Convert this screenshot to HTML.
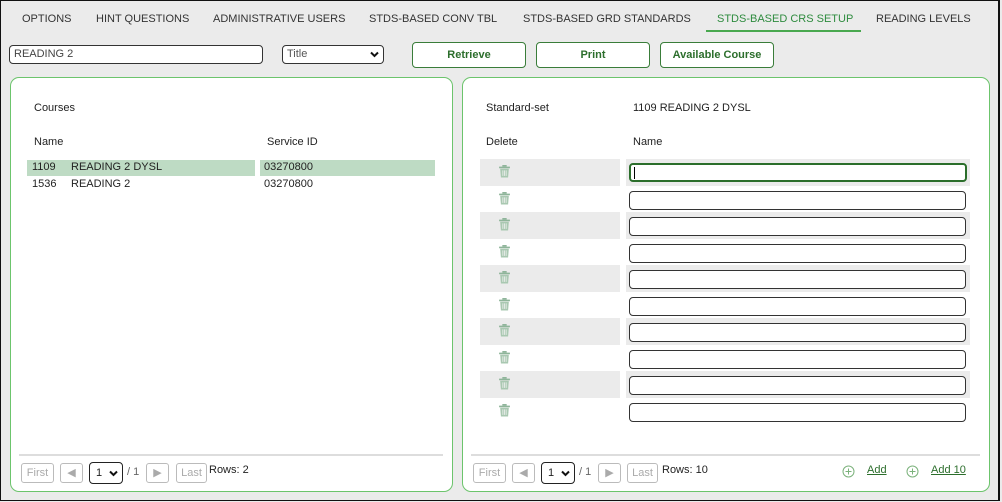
<!DOCTYPE html>
<html><head><meta charset="utf-8"><style>
*{box-sizing:border-box;margin:0;padding:0}
body{width:1002px;height:502px;background:#ebebeb;font-family:"Liberation Sans",sans-serif;font-size:11px;color:#222;position:relative;overflow:hidden}
.frame{position:absolute;left:0;top:0;width:1000px;height:501px;border:1px solid #111;border-right:2px solid #111}
.a{position:absolute;white-space:nowrap}
.tab{position:absolute;top:13px;font-size:11px;color:#333;white-space:nowrap}
.btn{position:absolute;top:42px;height:26px;border:1px solid #3a7d3a;border-radius:4px;background:#fff;color:#2c6e2c;font-weight:bold;font-size:11px;text-align:center;line-height:24px}
.panel{position:absolute;top:77px;height:415px;background:#fff;border:1px solid #6cc46c;border-radius:9px}
.inp{position:absolute;height:19px;border:1px solid #333;border-radius:4px;background:#fff}
.band{position:absolute;height:27px;background:#ebebeb}
.pb{position:absolute;top:463px;height:20px;border:1px solid #bbb;border-radius:3px;color:#aaa;font-size:11px;line-height:18px;text-align:center;background:#fff}
.sel{position:absolute;top:462px;width:34px;height:22px;border:1px solid #222;border-radius:4px;background:#fff;font-size:11px;line-height:20px;padding-left:6px}
.trash{position:absolute;width:11px;height:13px}
</style></head><body>
<div class="frame"></div>
<div class="tab" style="left:22px">OPTIONS</div>
<div class="tab" style="left:96px">HINT QUESTIONS</div>
<div class="tab" style="left:213px">ADMINISTRATIVE USERS</div>
<div class="tab" style="left:369px">STDS-BASED CONV TBL</div>
<div class="tab" style="left:523px">STDS-BASED GRD STANDARDS</div>
<div class="tab" style="left:717px;color:#2e8b3e">STDS-BASED CRS SETUP</div>
<div class="a" style="left:706px;top:30px;width:155px;height:2px;background:#49a84f"></div>
<div class="tab" style="left:876px">READING LEVELS</div>

<div class="inp" style="left:9px;top:45px;width:254px;height:19px;padding-left:4px;line-height:17px;color:#444">READING 2</div>
<div class="inp" style="left:282px;top:45px;width:102px;height:19px;padding-left:4px;line-height:17px;color:#555">Title<svg style="position:absolute;right:4px;top:5px" width="9" height="7" viewBox="0 0 9 7"><path d="M1 1.5L4.5 5L8 1.5" stroke="#111" stroke-width="2" fill="none"/></svg></div>
<div class="btn" style="left:412px;width:114px">Retrieve</div>
<div class="btn" style="left:536px;width:114px">Print</div>
<div class="btn" style="left:660px;width:114px">Available Course</div>

<div class="panel" style="left:10px;width:443px"></div>
<div class="a" style="left:34px;top:102px">Courses</div>
<div class="a" style="left:34px;top:136px">Name</div>
<div class="a" style="left:267px;top:136px">Service ID</div>
<div class="a" style="left:27px;top:160px;width:228px;height:16px;background:#bedbc4"></div>
<div class="a" style="left:260px;top:160px;width:175px;height:16px;background:#bedbc4"></div>
<div class="a" style="left:32px;top:161px">1109</div><div class="a" style="left:71px;top:161px">READING 2 DYSL</div><div class="a" style="left:264px;top:161px">03270800</div>
<div class="a" style="left:32px;top:178px">1536</div><div class="a" style="left:71px;top:178px">READING 2</div><div class="a" style="left:264px;top:178px">03270800</div>
<div class="a" style="left:19px;top:454px;width:424px;height:2px;background:#ddd"></div>
<div class="pb" style="left:21px;width:33px">First</div>
<div class="pb" style="left:60px;width:23px">&#9664;</div>
<div class="sel" style="left:89px">1<svg style="position:absolute;right:4px;top:7px" width="9" height="7" viewBox="0 0 9 7"><path d="M1 1.5L4.5 5L8 1.5" stroke="#111" stroke-width="2" fill="none"/></svg></div>
<div class="a" style="left:127px;top:466px;color:#666">/ 1</div>
<div class="pb" style="left:146px;width:23px">&#9654;</div>
<div class="pb" style="left:176px;width:31px">Last</div>
<div class="a" style="left:209px;top:464px">Rows: 2</div>

<div class="panel" style="left:462px;width:528px"></div>
<div class="a" style="left:486px;top:102px">Standard-set</div>
<div class="a" style="left:633px;top:102px">1109 READING 2 DYSL</div>
<div class="a" style="left:486px;top:136px">Delete</div>
<div class="a" style="left:633px;top:136px">Name</div>
<div id="rows"></div>
<div class="a" style="left:471px;top:454px;width:509px;height:2px;background:#ddd"></div>
<div class="pb" style="left:473px;width:33px">First</div>
<div class="pb" style="left:512px;width:23px">&#9664;</div>
<div class="sel" style="left:541px">1<svg style="position:absolute;right:4px;top:7px" width="9" height="7" viewBox="0 0 9 7"><path d="M1 1.5L4.5 5L8 1.5" stroke="#111" stroke-width="2" fill="none"/></svg></div>
<div class="a" style="left:579px;top:466px;color:#666">/ 1</div>
<div class="pb" style="left:598px;width:23px">&#9654;</div>
<div class="pb" style="left:627px;width:31px">Last</div>
<div class="a" style="left:662px;top:464px">Rows: 10</div>
<svg class="a" style="left:842px;top:465px" width="13" height="13"><circle cx="6.5" cy="6.5" r="5.5" stroke="#7bb27b" fill="none"/><path d="M6.5 3.5v6M3.5 6.5h6" stroke="#7bb27b"/></svg>
<div class="a" style="left:867px;top:464px;color:#2c6e2c;text-decoration:underline">Add</div>
<svg class="a" style="left:906px;top:465px" width="13" height="13"><circle cx="6.5" cy="6.5" r="5.5" stroke="#7bb27b" fill="none"/><path d="M6.5 3.5v6M3.5 6.5h6" stroke="#7bb27b"/></svg>
<div class="a" style="left:931px;top:464px;color:#2c6e2c;text-decoration:underline">Add 10</div>
<script>
var h='';
for(var i=0;i<10;i++){
 var y=159+i*26.5;
 if(i%2==0){h+='<div class="band" style="left:480px;top:'+y+'px;width:140px"></div><div class="band" style="left:626px;top:'+y+'px;width:344px"></div>';}
 h+='<svg class="trash" style="left:499px;top:'+(y+6)+'px" viewBox="0 0 10 12"><rect x="0" y="1.5" width="10" height="1.5" fill="#8fb59a"/><rect x="3" y="0" width="4" height="1.5" fill="#8fb59a"/><path d="M1 3.5h8l-0.7 8h-6.6z" fill="#a9c8b1"/><path d="M3.5 5v5M5 5v5M6.5 5v5" stroke="#f4f4f4" stroke-width="0.7"/></svg>';
 var st=i==0?'border:2px solid #2b6e2b;':'';
 h+='<div class="inp" style="left:629px;top:'+(i==0?y+4:y+5)+'px;width:'+(i==0?338:337)+'px;'+st+'">'+(i==0?'<div style="position:absolute;left:3px;top:2px;width:1px;height:12px;background:#000"></div>':'')+'</div>';
}
document.getElementById('rows').innerHTML=h;
</script>
</body></html>
